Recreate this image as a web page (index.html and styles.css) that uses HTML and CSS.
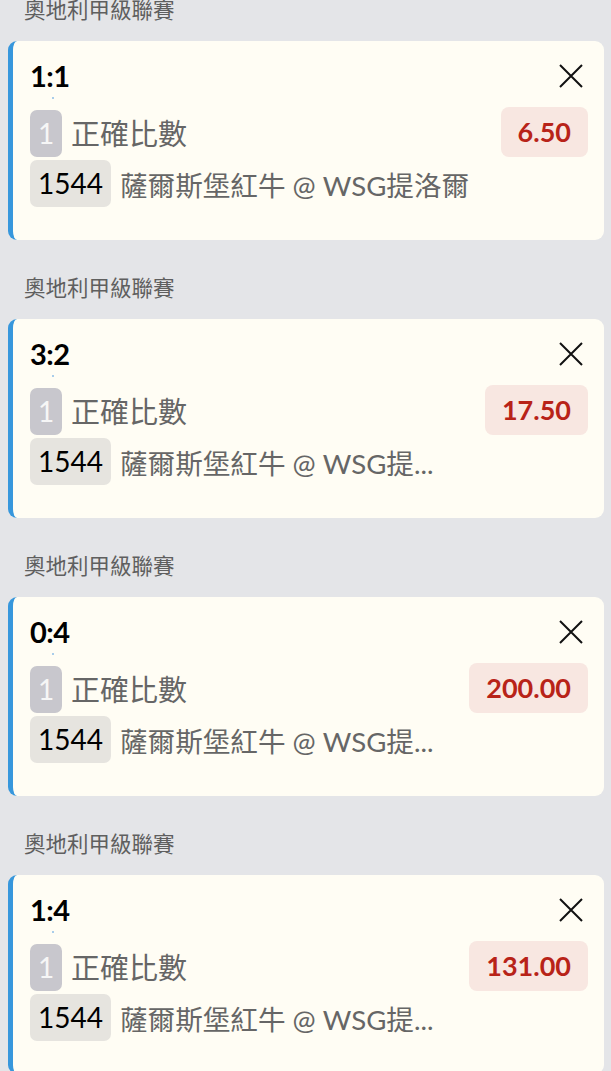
FILE: index.html
```html
<!DOCTYPE html>
<html lang="zh-Hant">
<head>
<meta charset="utf-8">
<title>Bet slip</title>
<link rel="stylesheet" href="styles.css">
</head>
<body>
<main class="slip">
  <section class="group">
    <div class="league">奧地利甲級聯賽</div>
    <article class="card">
      <div class="title-row">
        <span class="score">1:1</span>
        <button class="close" aria-label="close"><svg viewBox="0 0 24 24" width="24" height="24"><path d="M1 1 L23 23 M23 1 L1 23" stroke="#111" stroke-width="2" fill="none"/></svg></button>
      </div>
      <span class="dot"></span>
      <div class="market-row">
        <span class="leg">1</span>
        <span class="market">正確比數</span>
        <span class="odds">6.50</span>
      </div>
      <div class="event-row">
        <span class="code">1544</span>
        <span class="event">薩爾斯堡紅牛 @ WSG提洛爾</span>
      </div>
    </article>
  </section>
  <section class="group">
    <div class="league">奧地利甲級聯賽</div>
    <article class="card">
      <div class="title-row">
        <span class="score">3:2</span>
        <button class="close" aria-label="close"><svg viewBox="0 0 24 24" width="24" height="24"><path d="M1 1 L23 23 M23 1 L1 23" stroke="#111" stroke-width="2" fill="none"/></svg></button>
      </div>
      <span class="dot"></span>
      <div class="market-row">
        <span class="leg">1</span>
        <span class="market">正確比數</span>
        <span class="odds">17.50</span>
      </div>
      <div class="event-row">
        <span class="code">1544</span>
        <span class="event">薩爾斯堡紅牛 @ WSG提...</span>
      </div>
    </article>
  </section>
  <section class="group">
    <div class="league">奧地利甲級聯賽</div>
    <article class="card">
      <div class="title-row">
        <span class="score">0:4</span>
        <button class="close" aria-label="close"><svg viewBox="0 0 24 24" width="24" height="24"><path d="M1 1 L23 23 M23 1 L1 23" stroke="#111" stroke-width="2" fill="none"/></svg></button>
      </div>
      <span class="dot"></span>
      <div class="market-row">
        <span class="leg">1</span>
        <span class="market">正確比數</span>
        <span class="odds">200.00</span>
      </div>
      <div class="event-row">
        <span class="code">1544</span>
        <span class="event">薩爾斯堡紅牛 @ WSG提...</span>
      </div>
    </article>
  </section>
  <section class="group">
    <div class="league">奧地利甲級聯賽</div>
    <article class="card">
      <div class="title-row">
        <span class="score">1:4</span>
        <button class="close" aria-label="close"><svg viewBox="0 0 24 24" width="24" height="24"><path d="M1 1 L23 23 M23 1 L1 23" stroke="#111" stroke-width="2" fill="none"/></svg></button>
      </div>
      <span class="dot"></span>
      <div class="market-row">
        <span class="leg">1</span>
        <span class="market">正確比數</span>
        <span class="odds">131.00</span>
      </div>
      <div class="event-row">
        <span class="code">1544</span>
        <span class="event">薩爾斯堡紅牛 @ WSG提...</span>
      </div>
    </article>
  </section>
</main>
</body>
</html>
```
FILE: styles.css
```css
html, body {
  margin: 0;
  padding: 0;
  background: #e4e5e8;
  font-family: Lato, "Noto Sans CJK TC", sans-serif;
}

.slip {
  display: flex;
  flex-direction: column;
  gap: 38px;
  padding: 0 7px 0 8px;
}

.group {
  display: flex;
  flex-direction: column;
}

.league {
  font-size: 21.5px;
  line-height: 20px;
  height: 20px;
  color: #5f5f5f;
  padding-left: 16px;
  margin-bottom: 21px;
}

.card {
  background: #fffdf4;
  border-left: 5px solid #3797dc;
  border-radius: 9px;
  padding: 18px 16px 33px 17px;
  display: flex;
  flex-direction: column;
}

.title-row {
  display: flex;
  align-items: center;
  justify-content: space-between;
  height: 34px;
}

.score {
  font-size: 29px;
  font-weight: 700;
  color: #000;
  line-height: 34px;
  letter-spacing: -0.5px;
}

.close {
  background: none;
  border: 0;
  padding: 0;
  margin-right: 5px;
  width: 24px;
  height: 24px;
  display: flex;
}

.dot {
  width: 2px;
  height: 2px;
  background: #a9cdea;
  margin: 4px 0 8px 22px;
}

.market-row {
  display: flex;
  align-items: center;
  height: 50px;
}

.leg {
  width: 32px;
  height: 47px;
  margin-top: 3px;
  border-radius: 7px;
  background: #c8c7cd;
  color: #f6f6f6;
  font-size: 28px;
  line-height: 47px;
  text-align: center;
}

.market {
  font-size: 29px;
  color: #666;
  margin-left: 9px;
  flex: 1;
}

.odds {
  background: #f8e7e1;
  color: #b82318;
  font-size: 27px;
  font-weight: 700;
  line-height: 50px;
  height: 50px;
  padding: 0 17px;
  border-radius: 8px;
}

.event-row {
  display: flex;
  align-items: center;
  margin-top: 3px;
  height: 47px;
}

.code {
  background: #e6e4df;
  color: #000;
  font-size: 28px;
  line-height: 47px;
  height: 47px;
  padding: 0 8px;
  border-radius: 7px;
}

.event {
  font-size: 27.6px;
  color: #666;
  margin-left: 9px;
  white-space: nowrap;
}
```
